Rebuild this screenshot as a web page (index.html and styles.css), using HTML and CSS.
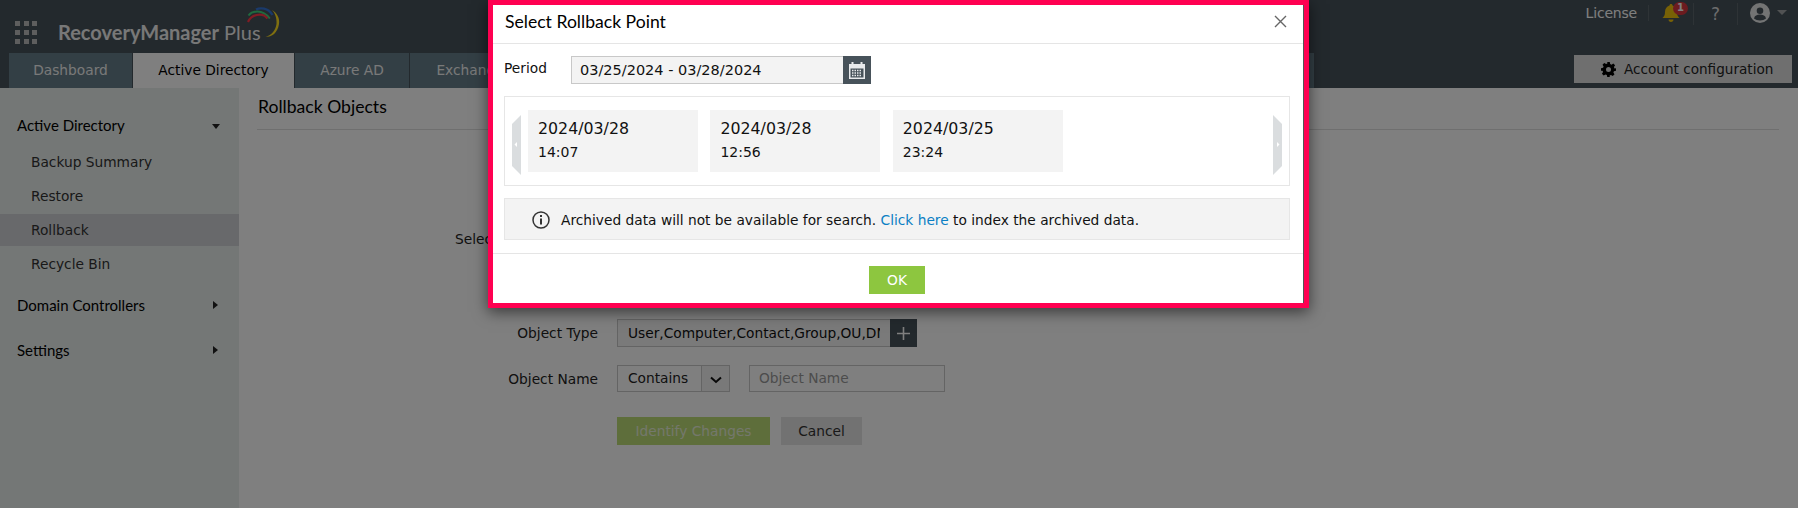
FILE: index.html
```html
<!DOCTYPE html>
<html lang="en">
<head>
<meta charset="utf-8">
<title>RecoveryManager Plus</title>
<link rel="stylesheet" href="styles.css">
</head>
<body>
<div class="page">
  <header class="topbar">
    <div class="brand">
      <div class="apps"><i></i><i></i><i></i><i></i><i></i><i></i><i></i><i></i><i></i></div>
      <div class="logo"><b>RecoveryManager</b> Plus
        <svg class="swoosh" width="36" height="34" viewBox="0 0 36 34" fill="none">
          <path d="M9 4.500C13 2.500 21 2.500 25.500 10" stroke="#3474d6" stroke-width="2.200"/>
          <path d="M1.500 10.500C5 6 15 3.500 22.800 13.500" stroke="#3ed47e" stroke-width="2"/>
          <path d="M1 17C4 10 15 6.500 20.500 13.500" stroke="#ff3848" stroke-width="2.200"/>
          <path d="M25 5C30 8 33 13 32 19C30.500 28 25 32 18.500 32C24 30.500 28.500 26 29.500 19C30 13 28 8 25 5Z" fill="#ffdf20"/>
        </svg>
      </div>
      <div class="utils">
        <a class="lic">License</a>
        <span class="bell">
          <svg width="18" height="20" viewBox="0 0 18 20"><path d="M9 1c1 0 1.500.7 1.500 1.500C13.500 3.300 15 6 15 9c0 3 .8 4.500 2.500 6H.5C2.200 13.500 3 12 3 9c0-3 1.500-5.700 4.500-6.500C7.500 1.700 8 1 9 1zM6.500 16.500h5c0 1.500-1 2.500-2.500 2.500s-2.500-1-2.500-2.500z" fill="#f0c20c"/></svg>
          <em>1</em>
        </span>
        <span class="help">?</span>
        <span class="user">
          <svg width="20" height="20" viewBox="0 0 20 20"><circle cx="10" cy="10" r="10" fill="#e6e8e9"/><circle cx="10" cy="7.800" r="3.300" fill="#47525a"/><path d="M4 15.500c.5-3 3-4 6-4s5.500 1 6 4c-1.500 1.200-3.700 2-6 2s-4.500-.8-6-2z" fill="#47525a"/></svg>
          <u></u>
        </span>
      </div>
    </div>
    <nav class="tabs">
      <a class="tab t-dash">Dashboard</a>
      <a class="tab t-ad active">Active Directory</a>
      <a class="tab t-az">Azure AD</a>
      <a class="tab t-ex">Exchange</a>
      <a class="tab t-sup">Support</a>
      <a class="account">
        <svg width="15" height="15" viewBox="0 0 24 24"><path fill="#000" fill-rule="evenodd" d="M10 0h4l.7 3.300 2.100.9 2.900-1.800 2.800 2.800-1.800 2.900.9 2.100L24 10v4l-3.300.7-.9 2.100 1.800 2.900-2.800 2.800-2.900-1.800-2.100.9L14 24h-4l-.7-3.300-2.100-.9-2.900 1.800-2.800-2.800 1.800-2.900-.9-2.100L0 14v-4l3.300-.7.9-2.100-1.800-2.900 2.800-2.800 2.900 1.800 2.100-.9zM12 8a4 4 0 1 0 0 8 4 4 0 0 0 0-8z"/></svg>
        Account configuration
      </a>
    </nav>
  </header>
  <div class="body">
    <aside class="side">
      <div class="head open">Active Directory</div>
      <a class="item">Backup Summary</a>
      <a class="item">Restore</a>
      <a class="item on">Rollback</a>
      <a class="item">Recycle Bin</a>
      <div class="head closed h2">Domain Controllers</div>
      <div class="head closed h3">Settings</div>
    </aside>
    <main class="main">
      <h1 class="title">Rollback Objects</h1>
      <form class="form">
        <label class="lab">Select Rollback Point</label>
        <div class="fld"></div>
        <label class="lab lab2">Object Type</label>
        <div class="fld lab2 row">
          <span class="types"><span>User,Computer,Contact,Group,OU,DNS</span></span>
          <span class="plus"><svg width="15" height="15" viewBox="0 0 15 15"><path d="M7.500 1v13M1 7.500h13" stroke="#fff" stroke-width="1.600"/></svg></span>
        </div>
        <label class="lab lab3">Object Name</label>
        <div class="fld lab3 row">
          <span class="sel">Contains<span class="chev"><svg width="12" height="8" viewBox="0 0 12 8" fill="none"><path d="M1 1.500l5 4.500 5-4.500" stroke="#111" stroke-width="2"/></svg></span></span>
          <span class="name">Object Name</span>
        </div>
        <div class="fld lab4 row btns">
          <a class="btn go">Identify Changes</a>
          <a class="btn no">Cancel</a>
        </div>
      </form>
    </main>
  </div>
  <div class="dim"></div>
  <section class="modal">
    <div class="inner">
      <div class="m-head"><h2>Select Rollback Point</h2>
        <svg width="13" height="13" viewBox="0 0 13 13"><path d="M1 1l11 11M12 1L1 12" stroke="#666" stroke-width="1.400" fill="none"/></svg>
      </div>
      <div class="m-body">
        <div class="period">
          <span class="p-lab">Period</span>
          <span class="p-in">03/25/2024 - 03/28/2024</span>
          <span class="p-cal"><svg width="18" height="18" viewBox="0 0 18 18"><path fill="#e8eaec" fill-rule="evenodd" d="M1 3h2.500V1h2v2h7V1h2v2H17v15H1zM2.500 7.500v9h13v-9z"/><path stroke="#e8eaec" stroke-dasharray="1.500 1" stroke-width="1.500" d="M4 9.500h10M4 12h10M4 14.500h10"/></svg></span>
        </div>
        <div class="points">
          <svg class="nav" width="9" height="60" viewBox="0 0 9 60"><path d="M9 0v60L0 51V9z" fill="#dadddf"/><path d="M5 27v5l-2.500-2.500z" fill="#fff"/></svg>
          <div class="card"><b>2024/03/28</b><span>14:07</span></div>
          <div class="card"><b>2024/03/28</b><span>12:56</span></div>
          <div class="card"><b>2024/03/25</b><span>23:24</span></div>
          <svg class="nav nav-r" width="9" height="60" viewBox="0 0 9 60"><path d="M0 0v60l9-9V9z" fill="#dadddf"/><path d="M4 27v5l2.500-2.500z" fill="#fff"/></svg>
        </div>
        <div class="note">
          <svg width="18" height="18" viewBox="0 0 18 18"><circle cx="9" cy="9" r="8" fill="none" stroke="#333" stroke-width="1.500"/><path d="M9 7.500v6M9 4v2" stroke="#333" stroke-width="2"/></svg>
          <p>Archived data will not be available for search. <a>Click here</a> to index the archived data.</p>
        </div>
      </div>
      <div class="m-foot"><a class="ok">OK</a></div>
    </div>
  </section>
</div>
</body>
</html>
```
FILE: styles.css
```css
* { box-sizing: border-box; }
html, body { margin: 0; height: 100%; }
body { font: 13.75px/1.2 "DejaVu Sans", sans-serif; color: #333; background: #fff; overflow: hidden; }
a { text-decoration: none; }
.page { height: 508px; display: flex; flex-direction: column; overflow: hidden; }

.topbar { height: 88px; background: #47525a; flex: none; }
.brand { height: 53px; display: flex; align-items: flex-start; padding-left: 15px; }
.apps { margin-top: 21px; width: 23px; display: grid; grid-template-columns: repeat(3, 5px); grid-auto-rows: 5px; gap: 4px 3.5px; }
.apps i { background: #bcbcbc; }
.logo { position: relative; margin: 19px 0 0 20px; font: 20px/26px "Lato", sans-serif; color: #f0f0f0; white-space: nowrap; }
.logo b { font-weight: 700; }
.swoosh { position: absolute; right: -22px; top: -14px; }
.utils { margin-left: auto; display: flex; align-items: center; height: 24px; padding-right: 11px; }
.lic { font-size: 14px; letter-spacing: -.2px; color: #fff; padding-right: 11px; border-right: 1px solid #5c666d; height: 16px; line-height: 16px; margin-top: 2px; }
.bell { position: relative; width: 45px; height: 22px; padding-left: 13px; border-right: 1px solid #5c666d; margin-top: 4px; }
.bell em { position: absolute; left: 24px; top: -1px; width: 15px; height: 13px; border-radius: 7px; background: #d9363e; color: #fff; font: bold 10px/12px "DejaVu Sans", sans-serif; text-align: center; }
.help { width: 44px; text-align: center; font-size: 17px; line-height: 22px; color: #d8d8d8; border-right: 1px solid #5c666d; margin-top: 4px; height: 22px; }
.user { display: flex; align-items: center; gap: 7px; padding-left: 12px; margin-top: 1px; }
.user u { width: 0; height: 0; border: 5px solid transparent; border-top: 5px solid #a3a5a6; border-bottom: 0; }

.tabs { height: 35px; display: flex; gap: 1px; padding-left: 9px; align-items: flex-start; }
.tab { height: 35px; line-height: 35px; text-align: center; background: #667e8a; color: #f2f2f2; font-size: 13.75px; flex: none; }
.tab.active { background: #fff; color: #000; }
.t-dash { width: 123px; }
.t-ad { width: 161px; }
.t-az { width: 114px; }
.t-ex { width: 120px; }
.t-sup { width: 113px; margin-left: 670px; }
.account { margin-left: auto; margin-top: 2px; margin-right: 6px; width: 218px; height: 28px; background: #dedede; color: #222; display: flex; align-items: center; padding-left: 27px; gap: 8px; font-size: 13.6px; }

.body { flex: 1; display: flex; min-height: 0; }
.side { width: 239px; background: #e8eeec; padding-top: 26px; flex: none; }
.head { position: relative; font: 15px/22px "Lato", sans-serif; color: #000; padding-left: 17px; height: 22px; }
.head::after { content: ""; position: absolute; width: 0; height: 0; border: 4px solid transparent; }
.open::after { left: 212px; top: 10px; border-top: 5px solid #222; border-bottom: 0; }
.closed::after { left: 213px; top: 7px; border-left: 5px solid #222; border-right: 0; }
.open { margin-bottom: 9px; }
.item { display: block; height: 34px; line-height: 34px; padding-left: 31px; color: #333; }
.item.on { height: 32px; line-height: 32px; background: #d0d2d6; margin: 1px 0; }
.h2 { margin-top: 13px; }
.h3 { margin-top: 23px; }

.main { flex: 1; min-width: 0; padding: 0 19px 0 18px; }
.title { margin: 0; height: 42px; border-bottom: 1px solid #dedede; font: 400 17.6px/38px "Lato", sans-serif; color: #000; padding-left: 1px; }
.form { display: grid; grid-template-columns: 341px auto; margin-top: 99px; color: #222; align-items: center; justify-content: start; }
.lab { text-align: right; line-height: 20px; }
.fld { margin-left: 19px; }
.lab2 { margin-top: 70px; }
.lab3 { margin-top: 18px; }
.lab4 { grid-column: 2; margin-top: 25px; }
.row { display: flex; }
.types { width: 273px; height: 28px; background: #f5f5f5; border: 1px solid #c8c8c8; border-right: 0; padding: 0 10px; line-height: 26px; color: #111; }
.types span { display: block; overflow: hidden; white-space: nowrap; }
.plus { width: 27px; height: 28px; background: #47525a; display: flex; align-items: center; justify-content: center; }
.sel { display: flex; width: 113px; height: 27px; border: 1px solid #c8c8c8; line-height: 25px; padding-left: 10px; justify-content: space-between; background: #fff; }
.chev { width: 28px; background: #f2f2f2; border-left: 1px solid #c8c8c8; display: flex; align-items: center; justify-content: center; padding-top: 2px; }
.name { width: 196px; height: 27px; margin-left: 19px; border: 1px solid #c8c8c8; line-height: 25px; padding-left: 9px; color: #999; }
.btn { height: 28px; line-height: 28px; text-align: center; display: block; }
.go { width: 153px; background: #bddc77; color: #e8f0d8; }
.no { width: 81px; margin-left: 11px; background: #e4e4e4; color: #333; }

.dim { position: absolute; inset: 0; background: rgba(0, 0, 0, .5); }
.modal { position: absolute; left: 488px; top: 0; width: 821px; height: 308px; border: 5px solid #ff0051; background: #555; box-shadow: 0 4px 14px rgba(0, 0, 0, .55); padding-right: 1px; }
.inner { height: 100%; background: #fff; display: flex; flex-direction: column; }
.m-head { height: 39px; flex: none; border-bottom: 1px solid #e5e5e5; display: flex; align-items: center; justify-content: space-between; padding: 0 16px 5px 12px; }
.m-head h2 { margin: 0; font: 400 17.6px/22px "Lato", sans-serif; color: #000; }
.m-body { flex: 1; padding: 12px 13px 0 11px; }
.period { display: flex; height: 28px; align-items: center; }
.p-lab { width: 67px; color: #111; margin-top: -3px; }
.p-in { width: 272px; height: 28px; background: #f3f3f3; border: 1px solid #c8c8c8; border-right: 0; padding-left: 8px; font-size: 14.5px; line-height: 26px; color: #111; }
.p-cal { width: 28px; height: 28px; background: #47525a; display: flex; align-items: center; justify-content: center; }
.points { height: 90px; margin-top: 12px; border: 1px solid #e6e6e6; display: flex; align-items: flex-start; padding: 13px 7px 0 7px; gap: 12.4px; }
.nav { margin: 5px -5.4px 0 0; flex: none; }
.nav-r { margin: 5px 0 0 auto; }
.card { width: 170px; height: 62px; background: #f3f3f3; padding: 9px 10px 0; color: #111; flex: none; }
.card b { display: block; font-weight: 400; font-size: 15.8px; line-height: 20px; }
.card span { display: block; font-size: 14px; line-height: 20px; margin-top: 3px; }
.note { height: 42px; margin-top: 12px; background: #f3f3f3; border: 1px solid #e6e6e6; display: flex; align-items: center; gap: 11px; padding: 2px 0 0 27px; }
.note p { margin: 0; color: #111; }
.note a { color: #0b7fc4; }
.m-foot { height: 50px; flex: none; border-top: 1px solid #e5e5e5; display: flex; justify-content: center; padding: 12px 2px 0 0; }
.ok { width: 56px; height: 28px; background: #8dc63f; color: #fff; text-align: center; line-height: 28px; }
```
